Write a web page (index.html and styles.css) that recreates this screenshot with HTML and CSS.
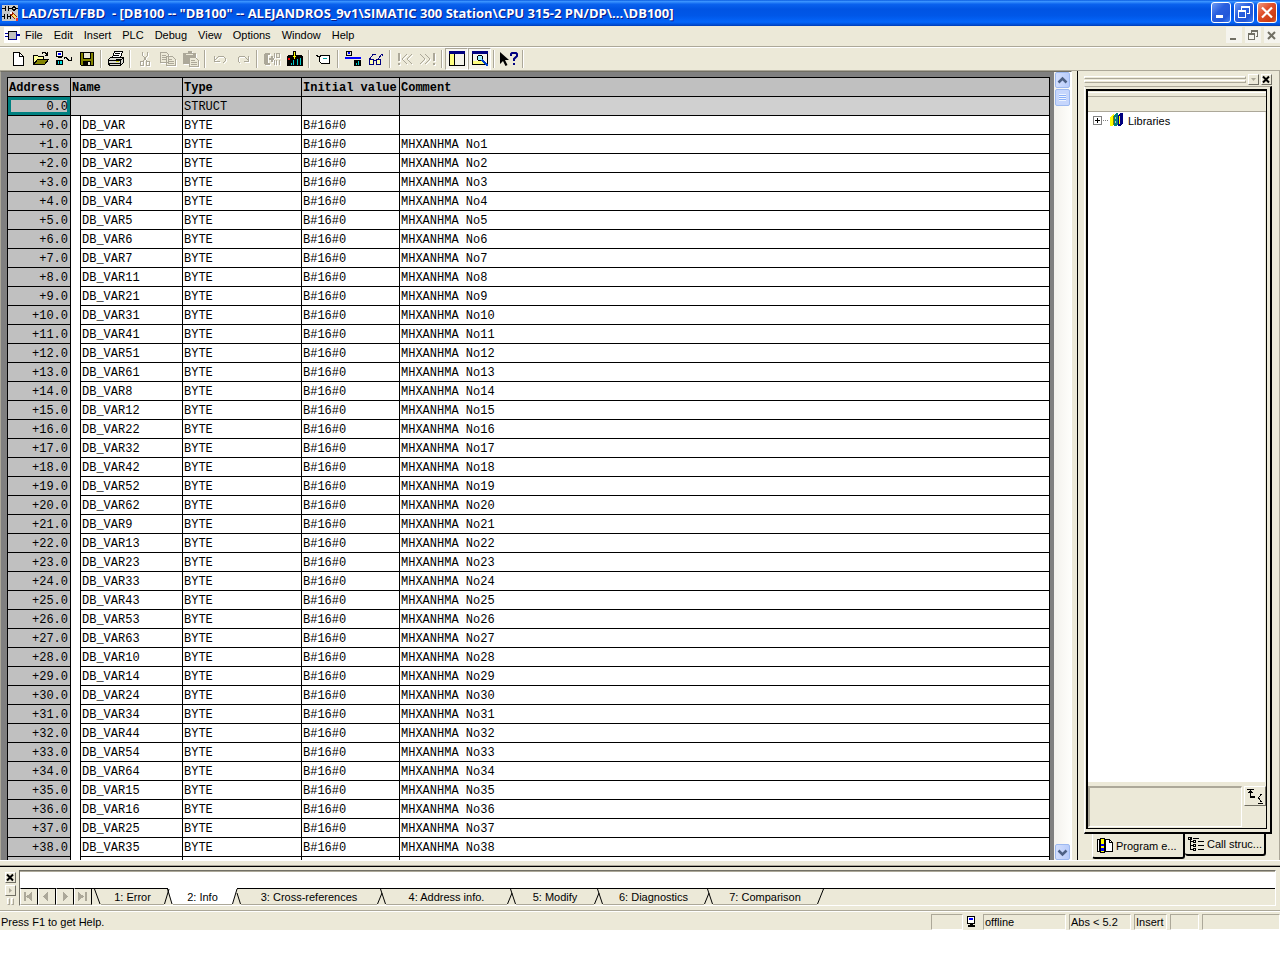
FILE: index.html
```html
<!DOCTYPE html>
<html lang="en">
<head>
<meta charset="utf-8">
<title>LAD/STL/FBD - DB100</title>
<link rel="stylesheet" href="styles.css">
</head>
<body>
<div class="window">
  <header class="titlebar">
    <svg class="px" width="16" height="16" viewBox="0 0 16 16"><path fill="#c8c8c8" d="M0 0h16v16H0z"/><path stroke="#000" fill="none" d="M0 3.500h3M3.500 1v5M6.500 1v5M7 3.500h3M14 3.500h2M0 11.500h2M2.500 9v5M5.500 9v5M6 11.500h2M8.500 9v5"/><path fill="none" stroke="#000" d="M10 3.500l2-2M12 1.500l2 2M10 3.500l2 2M14 3.500l-2 2"/><path stroke="#a02000" stroke-width="3" d="M9 8l5 5"/><path stroke="#ffe060" stroke-width="2" d="M11 10l3 3"/><path fill="#fff" d="M8 7h2v2H8z"/><path fill="#e33" d="M14 13h2v3h-2z"/></svg>
    <h1 class="title">LAD/STL/FBD&nbsp; - [DB100 -- "DB100" -- ALEJANDROS_9v1\SIMATIC 300 Station\CPU 315-2 PN/DP\...\DB100]</h1>
    <div class="caption-buttons">
      <button class="cap" aria-label="Minimize"><svg width="18" height="19"><path fill="#fff" d="M4 12h7v3H4z"/></svg></button>
      <button class="cap" aria-label="Restore"><svg class="px" width="18" height="19"><path fill="#fff" d="M6 3h9v8h-3v-1h2V5H7v2H6z"/><path fill="none" stroke="#fff" d="M3.500 8.500h7v6h-7z"/><path fill="#fff" d="M3 7h8v2H3z"/></svg></button>
      <button class="cap cap-close" aria-label="Close"><svg width="18" height="19"><path stroke="#fff" stroke-width="2.200" d="M4 4.500l10 10M14 4.500l-10 10"/></svg></button>
    </div>
  </header>

  <nav class="menubar">
    <svg class="px" width="16" height="16" viewBox="0 0 16 16"><path fill="#fff" d="M0 0h16v16H0z"/><path fill="#0000a0" d="M1 6h3v1H1zM1 9h3v1H1zM13 7h3v2h-3z"/><path fill="#c0c0c0" stroke="#000" d="M4.500 4.500h8v8h-8z"/><path stroke="#0000a0" d="M5 12.500h8M12.500 5v8"/></svg>
    <button>File</button><button>Edit</button><button>Insert</button><button>PLC</button><button>Debug</button><button>View</button><button>Options</button><button>Window</button><button>Help</button>
    <div class="mdi-buttons">
      <button aria-label="Minimize document"><svg width="16" height="16"><path fill="#716f64" d="M4 11h6v2H4z"/></svg></button>
      <button aria-label="Restore document"><svg class="px" width="16" height="16"><path fill="none" stroke="#716f64" d="M6 4.500h6.500v5H11M6.500 3v3M3.500 7.500h6v5h-6z"/><path fill="#716f64" d="M6 3h7v2H6zM3 6h7v2H3z"/></svg></button>
      <button aria-label="Close document"><svg width="16" height="16"><path stroke="#716f64" stroke-width="2" d="M4 5l7 7M11 5l-7 7"/></svg></button>
    </div>
  </nav>

  <div class="toolbar">
    <button aria-label="New"><svg class="px" viewBox="0 0 16 16"><path fill="#fff" stroke="#000" d="M3.500 1.500h6l4 4v9h-10z"/><path fill="none" stroke="#000" d="M9.500 1.500v4h4"/></svg></button>
    <button aria-label="Open"><svg class="px" viewBox="0 0 16 16"><path fill="#ffff9c" stroke="#000" d="M.5 13.500v-9h4l1 1h5v3h-6z"/><path fill="#848400" stroke="#000" d="M.5 13.500l4-5h11l-4 5z"/><path fill="none" stroke="#000" d="M9 2.500l1-1h2l2 2M14.500 1v3h-3"/></svg></button>
    <button aria-label="Open online"><svg class="px" viewBox="0 0 16 16"><path fill="#fff" stroke="#000" d="M.5.500h6v5h-6z"/><path fill="#00f" d="M2 2h3v2H2z"/><path d="M2 6h4v1H2zM0 9h7v5H0z"/><path fill="#00e0e0" d="M2 10h1v3H2zM4 10h2v3H4z"/><path fill="none" stroke="#000" d="M8 7.500l1-1h1l3 3h2M15.500 6v4M12 9.500h3"/></svg></button>
    <button aria-label="Save"><svg class="px" viewBox="0 0 16 16"><path fill="#848400" stroke="#000" d="M1.500 1.500h13v13h-12l-1-1z"/><path fill="#ece9d8" stroke="#000" d="M4.500 1.500h7v6h-7z"/><path d="M4 10h8v5H4z"/><path fill="#ece9d8" d="M9 11h2v3H9z"/></svg></button>
    <i class="sep"></i>
    <button aria-label="Print"><svg class="px" viewBox="0 0 16 16"><path fill="#fff" stroke="#000" d="M4.500 6.500l2-6h8l-2 6z"/><path stroke="#000" d="M7 2.500h5M6 4.500h5"/><path fill="#d8d8d0" stroke="#000" d="M.5 8.500l2-2h13v5l-3 3h-11l-1-2z"/><path stroke="#000" d="M1 9.500h11l3-2M12.500 10v4M1 12.500h11"/><path fill="#cc0" d="M8 10h3v1H8z"/></svg></button>
    <i class="sep"></i>
    <button aria-label="Cut" disabled><svg class="px" viewBox="0 0 16 16"><path fill="none" stroke="#aca899" d="M5.500 1v3l4 6M10.500 1v3l-4 6M4 10.500h2v4h-3v-3zM10 10.500h2v4h-3v-3z"/></svg></button>
    <button aria-label="Copy" disabled><svg class="px" viewBox="0 0 16 16"><path fill="#ece9d8" stroke="#aca899" d="M.5 1.500h6l2 2v8h-8zM6.500 5.500h6l3 3v6h-9z"/><path stroke="#aca899" d="M2 4.500h4M2 6.500h4M2 8.500h4M8 8.500h4M8 10.500h6M8 12.500h6"/></svg></button>
    <button aria-label="Paste" disabled><svg class="px" viewBox="0 0 16 16"><path fill="#aca899" stroke="#aca899" d="M.5 2.500h12v10H.5z"/><path fill="#ece9d8" d="M3 3h7v1H3z"/><path fill="#aca899" d="M5 0h4v3H5z"/><path fill="#ece9d8" stroke="#aca899" d="M6.500 6.500h6l3 3v6h-9z"/><path stroke="#aca899" d="M8 9.500h4M8 11.500h6M8 13.500h6"/></svg></button>
    <i class="sep"></i>
    <button aria-label="Undo" disabled><svg class="px" viewBox="0 0 16 16"><path fill="none" stroke="#aca899" d="M2.500 5v5h5M3 9l4-4h4l2 2v3l-2 2"/></svg></button>
    <button aria-label="Redo" disabled><svg class="px" viewBox="0 0 16 16"><path fill="none" stroke="#aca899" d="M13.500 5v5h-5M13 9L9 5H5L3 7v3l2 2"/></svg></button>
    <i class="sep"></i>
    <button aria-label="Compile" disabled><svg class="px" viewBox="0 0 16 16"><path fill="#aca899" d="M1 2h5v2H4v8h2v2H1l-1-2V4zM5 7h5v2H5zM7 5h2v6H7zM10 2h1v5h-1zM10 9h1v5h-1zM12 2h4v5h-4zM12 9h1v5h-1zM15 9h1v5h-1z"/><path fill="#ece9d8" d="M13 3h2v3h-2z"/></svg></button>
    <button aria-label="Download"><svg class="px" viewBox="0 0 16 16"><path d="M0 5h16v10H0zM1 4h4v1H1zM11 4h4v1h-4z"/><path fill="#e00" d="M1 7h2v2H1z"/><path fill="#00c8c8" d="M4 12h1v2H4zM6 9h1v5H6zM10 8h1v6h-1zM13 7h1v7h-1z"/><path fill="#ff0" stroke="#000" d="M6.500.500h2v4h2l-3 4-3-4h2z"/></svg></button>
    <i class="sep"></i>
    <button aria-label="Label"><svg class="px" viewBox="0 0 16 16"><path fill="#fff" stroke="#000" d="M3.500 5.500l2-1h8v8h-8l-2-2z"/><path stroke="#000" d="M0 4.500h2M1 5.500h4"/><path stroke="#00a0a0" d="M7 7.500h4"/></svg></button>
    <i class="sep"></i>
    <button aria-label="Connect"><svg class="px" viewBox="0 0 16 16"><path fill="#d7dbe8" stroke="#000" d="M1.500.500h5v4h-5z"/><path fill="#00f" d="M3 1h2v2H3zM0 6h16v2H0z"/><path d="M9 9h7v6H9z"/><path fill="#00d0d0" d="M11 12h1v2h-1zM13 10h1v4h-1z"/></svg></button>
    <button aria-label="Monitor"><svg class="px" viewBox="0 0 16 16"><path fill="#ffffb0" stroke="#000080" d="M1.500 8.500h4v5h-4zM8.500 8.500h4v5h-4z"/><path fill="none" stroke="#000080" d="M5 9.500h4M1.500 8l4-5h2M10.500 8l3-5h1v2"/></svg></button>
    <i class="sep"></i>
    <button aria-label="Previous error" disabled><svg class="px" viewBox="0 0 16 16"><path fill="#aca899" d="M1 2h2v8H1zM1 12h2v2H1z"/><path fill="none" stroke="#aca899" d="M10 3L5 8l5 5M15 3l-5 5 5 5"/></svg></button>
    <button aria-label="Next error" disabled><svg class="px" viewBox="0 0 16 16"><path fill="#aca899" d="M13 2h2v8h-2zM13 12h2v2h-2z"/><path fill="none" stroke="#aca899" d="M0 3l5 5-5 5M5 3l5 5-5 5"/></svg></button>
    <i class="sep"></i>
    <button class="pressed" aria-label="Overview"><svg class="px" viewBox="0 0 16 16"><path fill="#f4f3ea" stroke="#000" d="M.5.500h15v14H.5z"/><path fill="#000080" d="M0 0h16v3H0z"/><path fill="#ffff80" d="M1 3h4v11H1z"/><path d="M5 3h1v12H5z"/></svg></button>
    <button class="pressed" aria-label="Details"><svg class="px" viewBox="0 0 16 16"><path fill="#f4f3ea" stroke="#000" d="M.5.500h15v13H.5z"/><path fill="#000080" d="M0 0h16v3H0z"/><path fill="#ffff80" d="M1 10h12v3H1z"/><path fill="#a0f0ff" stroke="#000" d="M5.500 5.500l1-1h3l1 1v3l-1 1h-3l-1-1z"/><path stroke="#0040d0" stroke-width="2" d="M10 9l6 6"/></svg></button>
    <i class="sep"></i>
    <button aria-label="Help pointer"><svg class="help-icon" viewBox="0 0 20 16"><path d="M1 1v12l3-3 2.500 5 2-1L6 9h4z"/><path fill="none" stroke="#000080" stroke-width="2" d="M12 5V3l1-1h4l1 1v2l-3 3v2M15 12v2"/></svg></button>
    <i class="sep"></i>
  </div>

  <main class="work">
    <section class="editor">
      <div class="grid-pane">
        <table class="vars">
          <colgroup><col class="c-addr"><col class="c-indent"><col class="c-name"><col class="c-type"><col class="c-init"><col></colgroup>
          <thead>
            <tr><th>Address</th><th colspan="2">Name</th><th>Type</th><th>Initial value</th><th>Comment</th></tr>
          </thead>
          <tbody id="rows">
            <tr class="struct"><td class="addr selected">0.0</td><td colspan="2"></td><td class="kind">STRUCT</td><td></td><td></td></tr>
          </tbody>
        </table>
      </div>
      <div class="scrollbar">
        <button class="sb-btn" aria-label="Scroll up"><svg width="15" height="15"><path fill="none" stroke="#4d6185" stroke-width="2.500" d="M3.500 9.500l4-4 4 4"/></svg></button>
        <div class="thumb"></div>
        <button class="sb-btn sb-down" aria-label="Scroll down"><svg width="15" height="15"><path fill="none" stroke="#4d6185" stroke-width="2.500" d="M3.500 5.500l4 4 4-4"/></svg></button>
      </div>
    </section>

    <aside class="side">
      <div class="grip-row">
        <div class="grip"><i></i><i></i></div>
        <button class="mini" aria-label="Panel menu"><svg width="9" height="9"><path fill="#aca899" d="M2 3h5L4.500 6z"/></svg></button>
        <button class="mini" aria-label="Close panel"><svg width="9" height="9"><path stroke="#000" stroke-width="2" d="M1 1.500l6 6M7 1.500l-6 6"/></svg></button>
      </div>
      <div class="card">
        <div class="card-in">
          <div class="strip"></div>
          <div class="tree">
            <svg class="px" width="30" height="16" viewBox="0 0 30 16"><path fill="#fff" stroke="#808080" d="M.5 4.500h8v8h-8z"/><path stroke="#000" d="M2 8.500h5M4.500 6v5"/><path stroke="#808080" stroke-dasharray="1 1" d="M10 8.500h6"/><path fill="#ff0" d="M17 5l3-3h1v10l-2 2h-2z"/><path fill="#808000" d="M20 4h1v9h-1z"/><path fill="#008080" d="M21 4l2-3h2v11l-2 2h-2z"/><path fill="#c0c0c0" d="M22 5h1v2h-1zM22 9h1v2h-1z"/><path fill="#000080" d="M25 4l2-3h3v10l-3 3h-2z"/><path fill="#ff0" d="M26 4h1v8h-1z"/></svg>
            <span>Libraries</span>
          </div>
          <div class="info">
            <div class="info-box"></div>
            <button class="info-btn" aria-label="Toggle info"><svg class="px" width="18" height="16"><path d="M2 1h7v1H2zM5 2h1v7H5zM4 3h3v1H4zM3 4h5v1H3zM5 8h5v2H5z"/><path fill="none" stroke="#000" d="M16.500 6l-3 4 3 4M13 15.500h5"/></svg></button>
          </div>
        </div>
      </div>
      <div class="side-tabs">
        <button class="stab active"><svg class="px" width="16" height="16"><path fill="#fff" stroke="#000" d="M7.500 1.500h5l3 3v9h-8z"/><path fill="none" stroke="#000" d="M12.500 1.500v3h3"/><path fill="#fff" stroke="#000" d="M.5 1.500h8v12h-8z"/><path d="M2 1h2v13H2zM3 0h5v15H3z"/><path fill="#ff0" d="M4 1h3v13H4z"/><path fill="#00f" d="M4 6h3v2H4zM4 10h3v3H4z"/></svg>Program e...</button>
        <button class="stab"><svg class="px" width="16" height="15"><path fill="none" stroke="#000" d="M2.500 1v12M3 4.500h2M3 8.500h2M3 12.500h2M5.500 3.500h2v2h-2zM5.500 7.500h2v2h-2zM5.500 11.500h2v2h-2zM10 4.500h6M10 8.500h6M10 12.500h6M5 1.500h6M.5.500h3v2h-3z"/></svg>Call struc...</button>
      </div>
    </aside>
  </main>

  <section class="output">
    <div class="dock">
      <button class="mini" aria-label="Close output"><svg width="9" height="9"><path stroke="#000" stroke-width="2" d="M1 1.500l6 6M7 1.500l-6 6"/></svg></button>
      <button class="mini" aria-label="Expand output"><svg width="9" height="9"><path fill="#aca899" d="M3 2v5l3-2.500z"/></svg></button>
      <div class="dock-grip"><i></i><i></i></div>
    </div>
    <div class="out-box">
      <div class="out-text"></div>
      <div class="tabs">
        <button class="nav" aria-label="First"><svg class="px" width="15" height="14"><path fill="#aca899" d="M3 2h2v9H3zM11 2v9L5 6.500z"/></svg></button>
        <button class="nav" aria-label="Previous"><svg class="px" width="15" height="14"><path fill="#aca899" d="M9 2v9L4 6.500z"/></svg></button>
        <button class="nav" aria-label="Next"><svg class="px" width="15" height="14"><path fill="#aca899" d="M6 2v9l5-4.500z"/></svg></button>
        <button class="nav" aria-label="Last"><svg class="px" width="15" height="14"><path fill="#aca899" d="M3 2v9l6-4.500zM10 2h2v9h-2z"/></svg></button>
        <svg class="edge" width="9" height="17"><path stroke="#000" d="M0 .5h9"/><path fill="none" stroke="#000" d="M2.500 1l5.500 15"/></svg>
        <button class="tab t1">1: Error</button>
        <svg class="edge" width="9" height="17"><path fill="#fff" d="M4 0h5v16H8z"/><path stroke="#000" d="M0 .5h4"/><path fill="none" stroke="#000" d="M.5 16L5 1M3.500 1L8 16"/></svg>
        <button class="tab t2 active">2: Info</button>
        <svg class="edge" width="9" height="17"><path fill="#fff" d="M0 0h5L1 16H0z"/><path stroke="#000" d="M5 .5h4"/><path fill="none" stroke="#000" d="M.5 16L5 1M5 5l3.500 11"/></svg>
        <button class="tab t3">3: Cross-references</button>
        <svg class="edge" width="9" height="17"><path stroke="#000" d="M0 .5h9"/><path fill="none" stroke="#000" d="M.5 16L5 5M3.500 1L8.500 16"/></svg>
        <button class="tab t4">4: Address info.</button>
        <svg class="edge" width="9" height="17"><path stroke="#000" d="M0 .5h9"/><path fill="none" stroke="#000" d="M.5 16L5 5M3.500 1L8.500 16"/></svg>
        <button class="tab t5">5: Modify</button>
        <svg class="edge" width="9" height="17"><path stroke="#000" d="M0 .5h9"/><path fill="none" stroke="#000" d="M.5 16L5 5M3.500 1L8.500 16"/></svg>
        <button class="tab t6">6: Diagnostics</button>
        <svg class="edge" width="9" height="17"><path stroke="#000" d="M0 .5h9"/><path fill="none" stroke="#000" d="M.5 16L5 5M3.500 1L8.500 16"/></svg>
        <button class="tab t7">7: Comparison</button>
        <svg class="edge" width="9" height="17"><path stroke="#000" d="M0 .5h9"/><path fill="none" stroke="#000" d="M.5 16L6.500 1"/></svg>
        <div class="tab-rest"></div>
      </div>
    </div>
  </section>

  <footer class="status">
    <span class="hint">Press F1 to get Help.</span>
    <span class="cell s1"></span>
    <svg class="px net" width="12" height="12"><path fill="#fff" stroke="#000" d="M1.500.500h7v7h-7z"/><path fill="#00f" d="M3 2h4v2H3z"/><path d="M4 8h3v1H4zM2 9h7v2H2z"/></svg>
    <span class="cell s2">offline</span>
    <span class="cell s3">Abs &lt; 5.2</span>
    <span class="cell s4">Insert</span>
    <span class="cell s5"></span>
    <span class="cell s6"></span>
  </footer>
</div>
<script src="app.js"></script>
</body>
</html>
```

FILE: styles.css
```css
:root {
  --face: #ece9d8;
  --shade: #aca899;
  --dark: #716f64;
}
* { box-sizing: border-box; }
body {
  margin: 0;
  padding-bottom: 30px;
  background: #fff;
  font: 11px/14px "Liberation Sans", Arial, sans-serif;
  color: #000;
}
button {
  margin: 0;
  padding: 0;
  border: 0;
  background: none;
  font: inherit;
  color: inherit;
}
svg { display: block; flex: none; }
.px { shape-rendering: crispEdges; }

.window {
  display: flex;
  flex-direction: column;
  height: calc(100vh - 30px);
  background: var(--face);
}

/* Title bar */
.titlebar {
  display: flex;
  align-items: center;
  flex: none;
  height: 26px;
  padding: 0 3px 1px 2px;
  background: linear-gradient(#0a5be0 0, #3b94ff 6%, #0a62ee 16%, #0054e3 35%, #0057e8 60%, #0466fb 85%, #0150d8 94%, #003cb4 100%);
}
.title {
  flex: 1;
  margin: 0 0 0 3px;
  overflow: hidden;
  color: #fff;
  font: bold 13px/20px "Open Sans", sans-serif;
  white-space: nowrap;
  text-shadow: 1px 1px 0 #0a1883;
}
.caption-buttons { display: flex; gap: 3px; }
.cap {
  width: 20px;
  height: 21px;
  border: 1px solid #fff;
  border-radius: 3px;
  background: linear-gradient(135deg, #6f9cf5, #2a5fdf 40%, #2257d8 75%, #3f80f4);
}
.cap-close { background: linear-gradient(135deg, #f09a80, #e0502c 40%, #cc3c12 80%, #d8633c); }

/* Menu */
.menubar {
  display: flex;
  align-items: center;
  flex: none;
  height: 21px;
  padding: 0 0 2px 4px;
  border-bottom: 1px solid var(--shade);
}
.menubar > button { padding: 0 6px 0 5px; }
.mdi-buttons { display: flex; gap: 3px; margin-left: auto; }
.mdi-buttons button { width: 16px; height: 16px; background: #f5f4ee; }

/* Toolbar */
.toolbar {
  display: flex;
  align-items: center;
  flex: none;
  height: 24px;
  padding-left: 6px;
  border-top: 1px solid #fff;
  border-bottom: 1px solid var(--shade);
}
.toolbar button {
  display: flex;
  align-items: center;
  justify-content: center;
  width: 23px;
  height: 22px;
}
.toolbar svg { width: 16px; height: 16px; }
.toolbar .help-icon { width: 20px; }
.toolbar :disabled svg { filter: drop-shadow(1px 1px 0 #fff); }
.toolbar .pressed {
  border: 1px solid;
  border-color: var(--shade) #fff #fff var(--shade);
  background: #f6f4ec;
}
.sep {
  width: 2px;
  height: 18px;
  margin: 0 2px;
  border-left: 1px solid var(--shade);
  border-right: 1px solid #fff;
}

/* Work area */
.work { display: flex; flex: 1; min-height: 0; }
.editor {
  display: flex;
  flex: 1;
  min-width: 0;
  border-top: 1px solid var(--dark);
  border-left: 1px solid var(--shade);
  border-right: 1px solid #fff;
}
.grid-pane {
  flex: 1;
  min-width: 0;
  padding: 5px 4px 0 6px;
  overflow: hidden;
  background: #808080;
}
.vars {
  width: 100%;
  table-layout: fixed;
  border-collapse: separate;
  border-spacing: 0;
  border-top: 1px solid #000;
  border-left: 1px solid #000;
  background: #fff;
  font: 12px/16px "Liberation Mono", "Courier New", monospace;
}
.c-addr { width: 63px; }
.c-indent { width: 10px; }
.c-name { width: 102px; }
.c-type { width: 119px; }
.c-init { width: 98px; }
.vars th, .vars td {
  height: 19px;
  padding: 2px 0 0 1px;
  border-right: 1px solid #000;
  border-bottom: 1px solid #000;
  text-align: left;
  white-space: nowrap;
}
.vars th { background: #c0c0c0; font-weight: bold; }
.vars .addr { padding-right: 2px; background: #c0c0c0; text-align: right; }
.vars .indent { border-bottom: 0; }
.vars .struct td { background: #d0d0d0; }
.vars .struct .kind, .vars .struct .addr { background: #c0c0c0; }
.vars .struct .selected { box-shadow: inset 0 0 0 3px #008080; }

.scrollbar {
  display: flex;
  flex-direction: column;
  gap: 1px;
  width: 17px;
  padding: 0 1px;
  background: linear-gradient(90deg, #f3f1ec, #fefefb);
}
.sb-btn, .thumb {
  width: 15px;
  height: 16px;
  border: 1px solid #9db9f0;
  border-radius: 2px;
  background: linear-gradient(90deg, #d2defd, #b9cdfb);
}
.sb-btn svg { margin-left: -1px; }
.sb-down { margin-top: auto; }
.thumb {
  height: 17px;
  padding: 4px 3px;
  background: repeating-linear-gradient(#eef4fe 0 1px, #8cb0f8 1px 2px) content-box, #c6d6fc;
}

/* Side panel */
.side {
  display: flex;
  flex-direction: column;
  flex: none;
  width: 203px;
  margin-left: 5px;
  padding: 1px 7px 1px 6px;
  border-left: 1px solid #000;
  border-right: 1px solid var(--shade);
}
.grip-row { display: flex; align-items: center; gap: 2px; height: 14px; }
.grip { display: flex; flex: 1; flex-direction: column; gap: 1px; }
.grip i {
  height: 3px;
  border: 1px solid;
  border-color: #fff var(--shade) var(--shade) #fff;
}
.mini {
  width: 11px;
  height: 11px;
  border: 1px solid;
  border-color: #fff var(--dark) var(--dark) #fff;
}
.card {
  display: flex;
  flex: 1;
  min-height: 0;
  padding: 2px 3px 3px 1px;
  border: 1px solid;
  border-width: 1px 2px 2px 1px;
  border-color: #000;
  border-top-color: var(--shade);
  border-left-color: #fff;
}
.card-in {
  display: flex;
  flex: 1;
  flex-direction: column;
  border: 1px solid #000;
  border-width: 2px 1px 1px 2px;
}
.strip {
  height: 20px;
  margin-top: 1px;
  border-top: 1px solid #fff;
  border-bottom: 1px solid var(--shade);
  box-shadow: inset 0 3px 0 var(--face), inset 0 4px 0 var(--shade);
}
.tree {
  display: flex;
  align-items: flex-start;
  flex: 1;
  gap: 5px;
  padding: 0 0 0 5px;
  margin-right: 1px;
  background: #fff;
}
.tree span { padding-top: 2px; }
.info { display: flex; gap: 2px; padding: 4px 0 1px 0; }
.info-box {
  flex: 1;
  height: 41px;
  border: 2px solid;
  border-width: 2px 1px 1px 2px;
  border-color: var(--shade) #fff #fff var(--shade);
}
.info-btn {
  width: 22px;
  height: 20px;
  border: 1px solid;
  border-color: #fff var(--dark) var(--dark) #fff;
}
.side-tabs { display: flex; align-items: flex-start; padding-left: 8px; height: 25px; }
.stab {
  display: flex;
  align-items: center;
  gap: 3px;
  width: 81px;
  height: 22px;
  padding-left: 3px;
  border: solid #000;
  border-width: 0 2px 2px 0;
  border-radius: 0 0 3px 3px;
  white-space: nowrap;
}
.stab.active {
  width: 93px;
  height: 25px;
  padding-left: 4px;
  border-left: 1px solid #fff;
}

/* Output pane */
.output {
  display: flex;
  flex: none;
  gap: 3px;
  padding: 3px 4px 4px 5px;
  margin-top: 6px;
  border-top: 1px solid #000;
  box-shadow: 0 -1px 0 var(--shade), 0 -5px 0 var(--face), 0 -6px 0 #fff;
}
.dock { display: flex; flex-direction: column; gap: 2px; padding-top: 2px; }
.dock-grip { display: flex; gap: 1px; padding-left: 2px; }
.dock-grip i {
  width: 3px;
  height: 7px;
  border: 1px solid;
  border-color: #fff var(--shade) var(--shade) #fff;
}
.out-box {
  flex: 1;
  border: 1px solid;
  border-color: var(--dark) #fff #fff var(--dark);
}
.out-text { height: 17px; border-top: 1px solid var(--shade); background: #fff; }
.tabs { display: flex; height: 17px; }
.nav {
  width: 18px;
  border: 1px solid;
  border-color: #000 #000 var(--shade) #fff;
}
.tab, .tab-rest {
  border-top: 1px solid #000;
  border-bottom: 1px solid var(--shade);
  white-space: nowrap;
}
.tab-rest { flex: 1; border-bottom: 0; }
.tab.active { border-top-color: #fff; background: #fff; }
.t1 { width: 63px; }
.t2 { width: 59px; }
.t3 { width: 136px; }
.t4 { width: 121px; }
.t5 { width: 78px; }
.t6 { width: 101px; }
.t7 { width: 104px; }

/* Status bar */
.status {
  display: flex;
  align-items: center;
  flex: none;
  gap: 3px;
  height: 20px;
  padding: 2px 0 0 1px;
  border-top: 1px solid var(--shade);
  box-shadow: inset 0 1px 0 #fff;
}
.hint { flex: 1; }
.net { margin-right: 2px; }
.cell {
  height: 16px;
  padding-left: 1px;
  border: 1px solid;
  border-color: var(--shade) #fff #fff var(--shade);
  white-space: nowrap;
}
.s1 { width: 32px; }
.s2 { width: 83px; }
.s3 { width: 62px; }
.s4 { width: 33px; }
.s5 { width: 29px; }
.s6 { width: 78px; }
```

FILE: app.js
```js
const suffixes = ['', 1, 2, 3, 4, 5, 6, 7, 11, 21, 31, 41, 51, 61, 8, 12, 22, 32, 42, 52, 62,
  9, 13, 23, 33, 43, 53, 63, 10, 14, 24, 34, 44, 54, 64, 15, 16, 25, 35];

const rows = document.getElementById('rows');

function addRow(address, name, type, initial, comment) {
  const tr = rows.insertRow();
  const add = (text, cls) => {
    const td = tr.insertCell();
    td.textContent = text;
    if (cls) td.className = cls;
  };
  add(address, 'addr');
  add('', 'indent');
  add(name);
  add(type);
  add(initial);
  add(comment);
}

suffixes.forEach((suffix, i) => {
  addRow(`+${i}.0`, `DB_VAR${suffix}`, 'BYTE', 'B#16#0', i ? `MHXANHMA No${i}` : '');
});
addRow('', '', '', '', '');
```
